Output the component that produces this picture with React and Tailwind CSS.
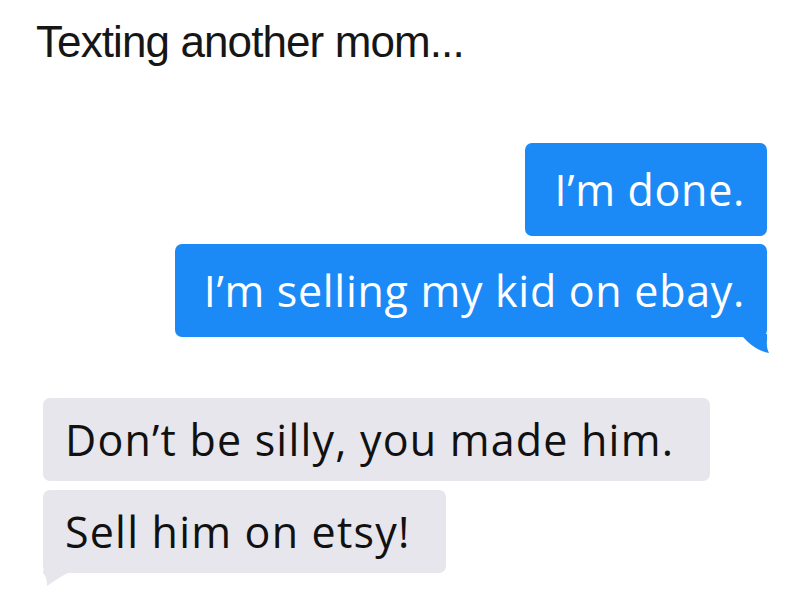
const bubbleFont = { fontFamily: '"Open Sans", "Noto Sans", sans-serif' }

function Sent({ text, tail }) {
  return (
    <div className="relative h-[93px] rounded-[7px] bg-[#1c8af6] pl-[29px] pr-[22px] flex items-center">
      <span className="text-white text-[43px] leading-none tracking-[0.7px]" style={bubbleFont}>{text}</span>
      {tail && (
        <svg className="absolute right-[-2px] bottom-[-17px] w-[32px] h-[20px]" viewBox="0 0 32 20">
          <path d="M2 0 H30 V6 C29.5 11 30 15 32 19 C24 18 14 12 6 3 Z" fill="#1c8af6" />
        </svg>
      )}
    </div>
  )
}

function Received({ text, tail }) {
  return (
    <div className="relative h-[83px] rounded-[7px] bg-[#e6e6ec] pl-[22px] pr-[36px] flex items-center">
      <span className="text-[#111] text-[43px] leading-none tracking-[1.2px]" style={bubbleFont}>{text}</span>
      {tail && (
        <svg className="absolute left-[-1px] bottom-[-15px] w-[28px] h-[18px]" viewBox="0 0 28 18">
          <path d="M1 0 H26 V3 C20 6 12 11 5 16 C5 11 4 6 1 3 Z" fill="#e6e6ec" />
        </svg>
      )}
    </div>
  )
}

export default function App() {
  return (
    <div className="w-[800px] h-[592px] bg-white overflow-hidden relative">
      <h1
        className="pl-[36px] pt-[17px] text-[44px] leading-[50px] text-[#161616] tracking-[-0.9px]"
        style={{ fontFamily: '"Liberation Sans", Arial, sans-serif' }}
      >
        Texting another mom...
      </h1>

      <div className="flex flex-col items-end gap-[8px] pr-[33px] mt-[76px]">
        <Sent text="I’m done." />
        <Sent text="I’m selling my kid on ebay." tail />
      </div>

      <div className="flex flex-col items-start gap-[9px] pl-[43px] mt-[61px]">
        <Received text="Don’t be silly, you made him." />
        <Received text="Sell him on etsy!" tail />
      </div>
    </div>
  )
}
